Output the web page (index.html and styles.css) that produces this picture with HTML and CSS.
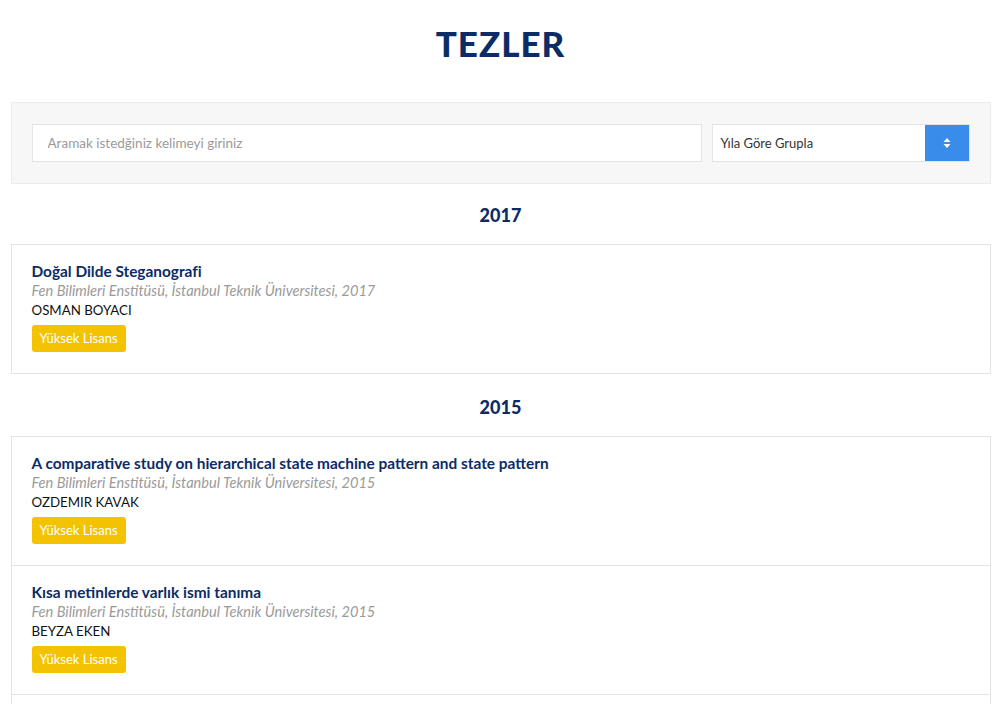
FILE: index.html
```html
<!DOCTYPE html>
<html lang="tr">
<head>
<meta charset="utf-8">
<title>Tezler</title>
<link rel="stylesheet" href="styles.css">
</head>
<body>
<div class="container">
  <h1 class="page-title">TEZLER</h1>

  <div class="filter-box">
    <input class="search-input" type="text" placeholder="Aramak istedğiniz kelimeyi giriniz">
    <div class="select">
      <span class="select-label">Yıla Göre Grupla</span>
      <span class="select-btn">
        <svg width="8" height="12" viewBox="0 0 8 12"><path d="M4 1 L7.5 5 H0.5 Z M4 11 L7.5 7 H0.5 Z" fill="#fff"/></svg>
      </span>
    </div>
  </div>

  <h2 class="year">2017</h2>
  <div class="list">
    <div class="item">
      <div class="item-title">Doğal Dilde Steganografi</div>
      <div class="item-meta">Fen Bilimleri Enstitüsü, İstanbul Teknik Üniversitesi, 2017</div>
      <div class="item-author">OSMAN BOYACI</div>
      <span class="badge">Yüksek Lisans</span>
    </div>
  </div>

  <h2 class="year">2015</h2>
  <div class="list">
    <div class="item">
      <div class="item-title">A comparative study on hierarchical state machine pattern and state pattern</div>
      <div class="item-meta">Fen Bilimleri Enstitüsü, İstanbul Teknik Üniversitesi, 2015</div>
      <div class="item-author">OZDEMIR KAVAK</div>
      <span class="badge">Yüksek Lisans</span>
    </div>
    <div class="item">
      <div class="item-title">Kısa metinlerde varlık ismi tanıma</div>
      <div class="item-meta">Fen Bilimleri Enstitüsü, İstanbul Teknik Üniversitesi, 2015</div>
      <div class="item-author">BEYZA EKEN</div>
      <span class="badge">Yüksek Lisans</span>
    </div>
    <div class="item item-next"></div>
  </div>
</div>
</body>
</html>
```

FILE: styles.css
```css
* { box-sizing: border-box; }
html, body { margin: 0; padding: 0; background: #fff; }
body {
  font-family: "Lato", "Liberation Sans", sans-serif;
  color: #222;
  overflow: hidden;
}
.container {
  width: 980px;
  margin: 0 auto;
}
.page-title {
  margin: 0;
  padding-top: 23px;
  margin-bottom: 39px;
  text-align: center;
  font-size: 35px;
  line-height: 40px;
  font-weight: 900;
  letter-spacing: 1px;
  color: #0b2c66;
}
.filter-box {
  background: #f7f7f7;
  border: 1px solid #ececec;
  padding: 21px 20px;
  display: grid;
  grid-template-columns: 1fr 258px;
  column-gap: 10px;
  margin-bottom: 16px;
}
.search-input {
  height: 38px;
  border: 1px solid #e3e3e3;
  background: #fff;
  padding: 0 15px;
  font-family: inherit;
  font-size: 13.5px;
  color: #333;
  outline: none;
}
.search-input::placeholder { color: #9a9a9a; }
.select {
  height: 38px;
  border: 1px solid #e3e3e3;
  background: #fff;
  display: flex;
  align-items: stretch;
}
.select-label {
  flex: 1;
  display: flex;
  align-items: center;
  padding-left: 8px;
  font-size: 13px;
  color: #333;
}
.select-btn {
  width: 44px;
  background: #3a8cea;
  display: flex;
  align-items: center;
  justify-content: center;
}
.year {
  margin: 0 0 14px;
  text-align: center;
  font-size: 18px;
  line-height: 30px;
  font-weight: 900;
  color: #0b2c66;
}
.list {
  border: 1px solid #e3e3e3;
  margin-bottom: 18px;
}
.item {
  padding: 16px 20px 21px;
  border-top: 1px solid #e3e3e3;
}
.item:first-child { border-top: none; }
.item-next { height: 60px; }
.item-title {
  font-size: 15.4px;
  line-height: 20px;
  font-weight: 700;
  color: #0b2c66;
}
.item-meta {
  font-size: 14.6px;
  line-height: 19px;
  font-style: italic;
  color: #9a9a9a;
}
.item-author {
  font-size: 13.3px;
  line-height: 20px;
  color: #111;
}
.badge {
  display: inline-block;
  margin-top: 5px;
  height: 27px;
  line-height: 27px;
  padding: 0 8px;
  border-radius: 3px;
  background: #f4c300;
  color: #fff;
  font-size: 13px;
}
```
